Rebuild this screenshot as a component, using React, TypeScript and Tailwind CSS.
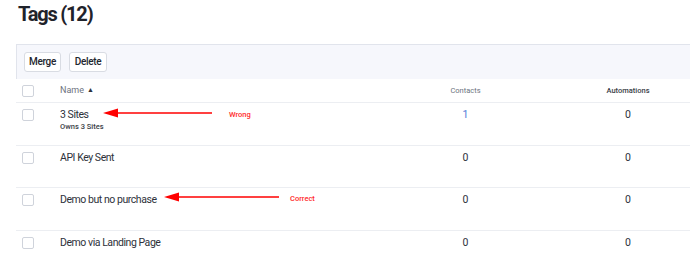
import React from "react";

const rows = [
  { name: "3 Sites", sub: "Owns 3 Sites", contacts: "1", link: true, autos: "0" },
  { name: "API Key Sent", contacts: "0", autos: "0" },
  { name: "Demo but no purchase", contacts: "0", autos: "0" },
  { name: "Demo via Landing Page", contacts: "0", autos: "0" },
];

function Box() {
  return <div className="w-[12px] h-[12px] rounded-[2px] border border-[#cfd3db] bg-white" />;
}

function Arrow({ tip, end, y, label, labelX }: { tip: number; end: number; y: number; label: string; labelX: number }) {
  return (
    <>
      <svg className="absolute left-0 top-0 pointer-events-none" width={690} height={266}>
        <line x1={tip + 12} y1={y} x2={end} y2={y} stroke="#ff0000" strokeWidth={1.3} />
        <polygon points={`${tip},${y} ${tip + 15},${y - 4.5} ${tip + 15},${y + 4.5}`} fill="#ff0000" />
      </svg>
      <span
        className="absolute text-[7.5px] font-medium text-[#ff2a2a] leading-none"
        style={{ left: labelX, top: y - 2 }}
      >
        {label}
      </span>
    </>
  );
}

export default function App() {
  return (
    <div className="relative w-[690px] h-[266px] overflow-hidden bg-white text-[#2d313a]" style={{ fontFamily: "Roboto, 'Noto Sans', sans-serif" }}>
      <h1 className="pl-[18px] pt-[2px] h-[44px] text-[20px] font-bold leading-[24px] tracking-[-1.2px] text-[#1f232b]">Tags (12)</h1>
      <div className="ml-[16px]">
        <div className="h-[35px] bg-[#f6f7fc] border-t border-l border-[#e1e4ec] flex items-center gap-[8px] pl-[7px]">
          <button className="h-[20px] w-[37px] rounded-[3px] border border-[#d9dce3] bg-white text-[10px] font-medium leading-none tracking-[-0.3px] text-[#22262e]">Merge</button>
          <button className="h-[20px] w-[38px] rounded-[3px] border border-[#d9dce3] bg-white text-[10px] font-medium leading-none tracking-[-0.3px] text-[#22262e]">Delete</button>
        </div>
        <div className="grid grid-cols-[44px_305px_201px_1fr] h-[24px] items-center border-b border-[#eceef2]">
          <div className="pl-[6px]"><Box /></div>
          <div className="text-[9px] text-[#6d7380] flex items-center gap-[3px]">Name <span className="text-[7px] text-[#2d313a]">▲</span></div>
          <div className="text-center text-[7.5px] text-[#6d7380]">Contacts</div>
          <div className="text-center text-[7.5px] text-[#3a3e47] font-medium">Automations</div>
        </div>
        {rows.map((r, i) => (
          <div key={i} className="grid grid-cols-[44px_305px_201px_1fr] h-[42.5px] border-b border-[#eceef2] pt-[5px] items-start">
            <div className="pl-[6px] pt-[1px]"><Box /></div>
            <div className="leading-none">
              <div className="text-[10.5px] leading-[14px] tracking-[-0.45px]">{r.name}</div>
              {r.sub && <div className="text-[7.5px] leading-[9px] font-medium text-[#3a3e47]">{r.sub}</div>}
            </div>
            <div className={`text-center text-[10.5px] leading-[14px] ${r.link ? "text-[#4f7bd8]" : ""}`}>{r.contacts}</div>
            <div className="text-center text-[10.5px] leading-[14px]">{r.autos}</div>
          </div>
        ))}
      </div>
      <Arrow tip={103} end={212} y={113} label="Wrong" labelX={229} />
      <Arrow tip={164} end={279} y={197} label="Correct" labelX={290} />
    </div>
  );
}
